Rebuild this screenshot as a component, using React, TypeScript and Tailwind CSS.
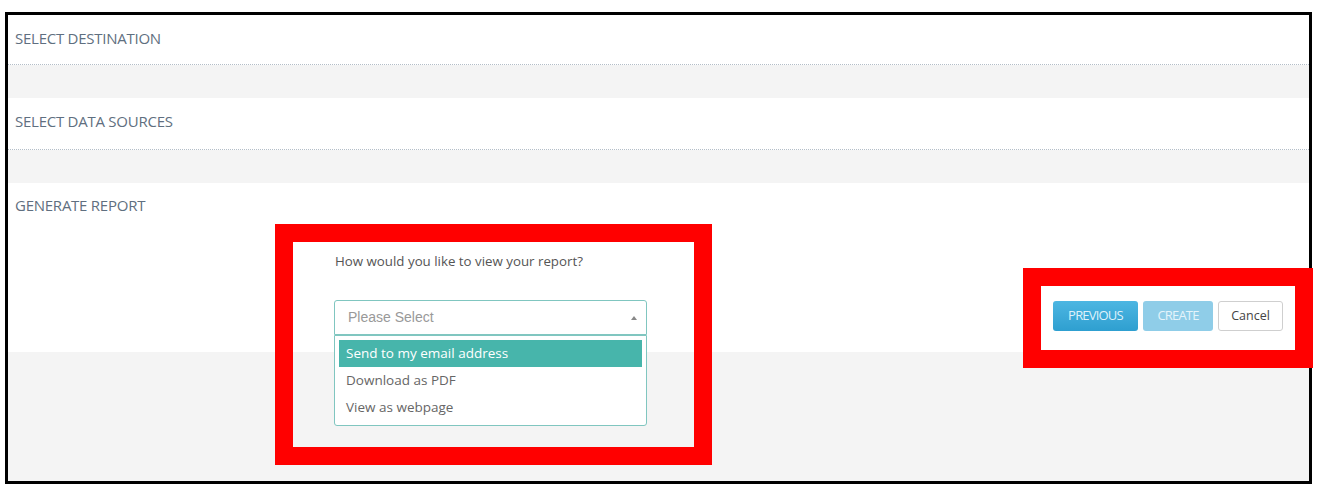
import React from "react";

const titleCls =
  "text-[15px] leading-[17px] uppercase text-[#5f6f80] tracking-[-0.25px]";

export default function App() {
  return (
    <div
      className="relative w-[1323px] h-[498px] bg-white overflow-hidden"
      style={{ fontFamily: '"Open Sans", "Liberation Sans", sans-serif' }}
    >
      <div className="ml-[5px] mt-[12px] w-[1307px] h-[472px] border-[3px] border-black flex flex-col bg-[#f4f4f4]">
        <div className="h-[50px] bg-white border-b border-dotted border-[#b4bec8] pl-[7px] pt-[15px]">
          <div className={titleCls}>Select Destination</div>
        </div>
        <div className="h-[33px] bg-[#f4f4f4]" />
        <div className="h-[52px] bg-white border-b border-dotted border-[#b4bec8] pl-[7px] pt-[15px]">
          <div className={titleCls}>Select Data Sources</div>
        </div>
        <div className="h-[33px] bg-[#f4f4f4]" />
        <div className="h-[169px] bg-white pl-[7px] pt-[14px] flex flex-col">
          <div className={titleCls}>Generate Report</div>
          <div className="flex items-start justify-between pr-[26px]">
            <div className="ml-[319px] mt-[38px] flex flex-col w-[313px]">
              <div className="text-[13.3px] leading-[18px] text-[#555] pl-[1px]">
                How would you like to view your report?
              </div>
              <div className="relative mt-[30px]">
                <div className="h-[35px] border border-[#80c6c0] rounded-t-[3px] bg-white flex items-center justify-between pl-[13px] pr-[9px]">
                  <span
                    className="text-[14px] text-[#999]"
                    style={{ fontFamily: '"Liberation Sans", Arial, sans-serif' }}
                  >
                    Please Select
                  </span>
                  <span className="w-0 h-0 border-l-[3px] border-r-[3px] border-b-[4px] border-l-transparent border-r-transparent border-b-[#888]" />
                </div>
                <div className="absolute left-0 top-full w-[313px] border border-[#80c6c0] rounded-b-[3px] bg-white p-[4px] z-10">
                  <div className="h-[27px] bg-[#47b5ab] text-white text-[13.5px] leading-[27px] pl-[7px]">
                    Send to my email address
                  </div>
                  <div className="h-[27px] text-[#666] text-[13.5px] leading-[27px] pl-[7px]">
                    Download as PDF
                  </div>
                  <div className="h-[27px] text-[#666] text-[13.5px] leading-[27px] pl-[7px]">
                    View as webpage
                  </div>
                </div>
              </div>
            </div>
            <div className="mt-[87px] flex gap-[5px]">
              <button className="w-[85px] h-[30px] rounded-[3px] bg-gradient-to-b from-[#4cb6e2] to-[#2e9fd0] text-[#dff1fa] text-[13px] font-medium tracking-[-0.8px] uppercase">
                Previous
              </button>
              <button className="w-[70px] h-[30px] rounded-[3px] bg-[#8fcde8] text-[#e4f4fb] text-[13px] font-medium tracking-[-0.8px] uppercase">
                Create
              </button>
              <button className="w-[65px] h-[30px] rounded-[3px] bg-white border border-[#cfcfcf] text-[#444] text-[12.5px]">
                Cancel
              </button>
            </div>
          </div>
        </div>
        <div className="flex-1 bg-[#f4f4f4]" />
      </div>

      <div className="absolute left-[275px] top-[224px] w-[437px] h-[241px] border-[18px] border-[#ff0000] pointer-events-none z-20" />
      <div className="absolute left-[1023px] top-[268px] w-[290px] h-[100px] border-[18px] border-[#ff0000] pointer-events-none z-20" />
    </div>
  );
}
